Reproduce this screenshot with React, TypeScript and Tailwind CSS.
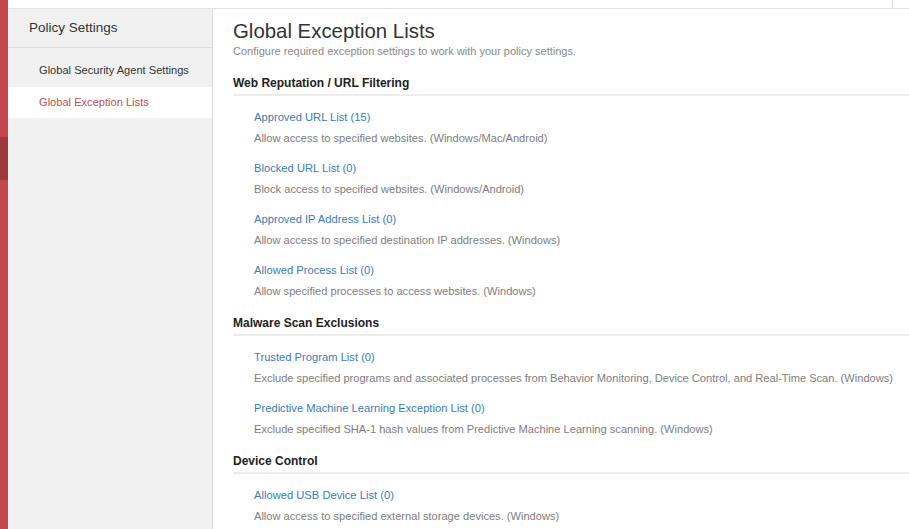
import React from 'react';

interface ListItem {
    title: string;
    desc: string;
}

interface Section {
    name: string;
    items: ListItem[];
}

const sections: Section[] = [
    {
        name: 'Web Reputation / URL Filtering',
        items: [
            { title: 'Approved URL List (15)', desc: 'Allow access to specified websites. (Windows/Mac/Android)' },
            { title: 'Blocked URL List (0)', desc: 'Block access to specified websites. (Windows/Android)' },
            { title: 'Approved IP Address List (0)', desc: 'Allow access to specified destination IP addresses. (Windows)' },
            { title: 'Allowed Process List (0)', desc: 'Allow specified processes to access websites. (Windows)' },
        ],
    },
    {
        name: 'Malware Scan Exclusions',
        items: [
            { title: 'Trusted Program List (0)', desc: 'Exclude specified programs and associated processes from Behavior Monitoring, Device Control, and Real-Time Scan. (Windows)' },
            { title: 'Predictive Machine Learning Exception List (0)', desc: 'Exclude specified SHA-1 hash values from Predictive Machine Learning scanning. (Windows)' },
        ],
    },
    {
        name: 'Device Control',
        items: [
            { title: 'Allowed USB Device List (0)', desc: 'Allow access to specified external storage devices. (Windows)' },
        ],
    },
];

export default function App() {
    return (
        <div
            className="w-[909px] h-[529px] overflow-hidden flex bg-white"
            style={{ fontFamily: '"Liberation Sans", Arial, sans-serif' }}
        >
            {/* red rail */}
            <div className="w-[8px] shrink-0 flex flex-col bg-[#c2464a]">
                <div className="h-[137px]" />
                <div className="h-[43px] bg-[#9d383b]" />
            </div>

            <div className="flex-1 flex flex-col">
                {/* top strip */}
                <div className="h-[9px] shrink-0 flex justify-end border-b border-[#e2e2e2]">
                    <div className="w-[17px] border-l border-[#dcdcdc]" />
                </div>

                <div className="flex-1 flex min-h-0">
                    {/* sidebar */}
                    <aside className="w-[205px] shrink-0 bg-[#f1f1f1] border-r border-[#dadada]">
                        <div className="h-[39px] flex items-center pl-[21px] pt-[1px] text-[13.5px] text-[#333] border-b border-[#dedede]">
                            Policy Settings
                        </div>
                        <div className="h-[39px] flex items-center pl-[31px] pt-[6px] text-[11.1px] text-[#333]">
                            Global Security Agent Settings
                        </div>
                        <div className="h-[31px] flex items-center pl-[31px] pb-[1px] text-[11.1px] text-[#c0504f] bg-white">
                            Global Exception Lists
                        </div>
                    </aside>

                    {/* main */}
                    <main className="flex-1 pl-[20px] pt-[10px]">
                        <h1 className="text-[20.4px] leading-[24px] text-[#333]">Global Exception Lists</h1>
                        <p className="text-[11px] leading-[14px] text-[#888] mt-[1px]">
                            Configure required exception settings to work with your policy settings.
                        </p>
                        <div className="mt-[17px]">
                            {sections.map(section => (
                                <div key={section.name}>
                                    <div className="text-[12px] font-bold text-[#222] leading-[16px] pb-[3px] border-b-2 border-[#ececec]">
                                        {section.name}
                                    </div>
                                    <div className="pl-[21px] pt-[14px] pb-[16px] flex flex-col gap-[15px]">
                                        {section.items.map(item => (
                                            <div key={item.title} className="flex flex-col gap-[6px]">
                                                <a className="text-[11.2px] leading-[15px] text-[#3a7cb6] cursor-pointer">{item.title}</a>
                                                <span className="text-[11.1px] leading-[15px] text-[#7d7d7d] whitespace-nowrap">{item.desc}</span>
                                            </div>
                                        ))}
                                    </div>
                                </div>
                            ))}
                        </div>
                    </main>
                </div>
            </div>
        </div>
    );
}
